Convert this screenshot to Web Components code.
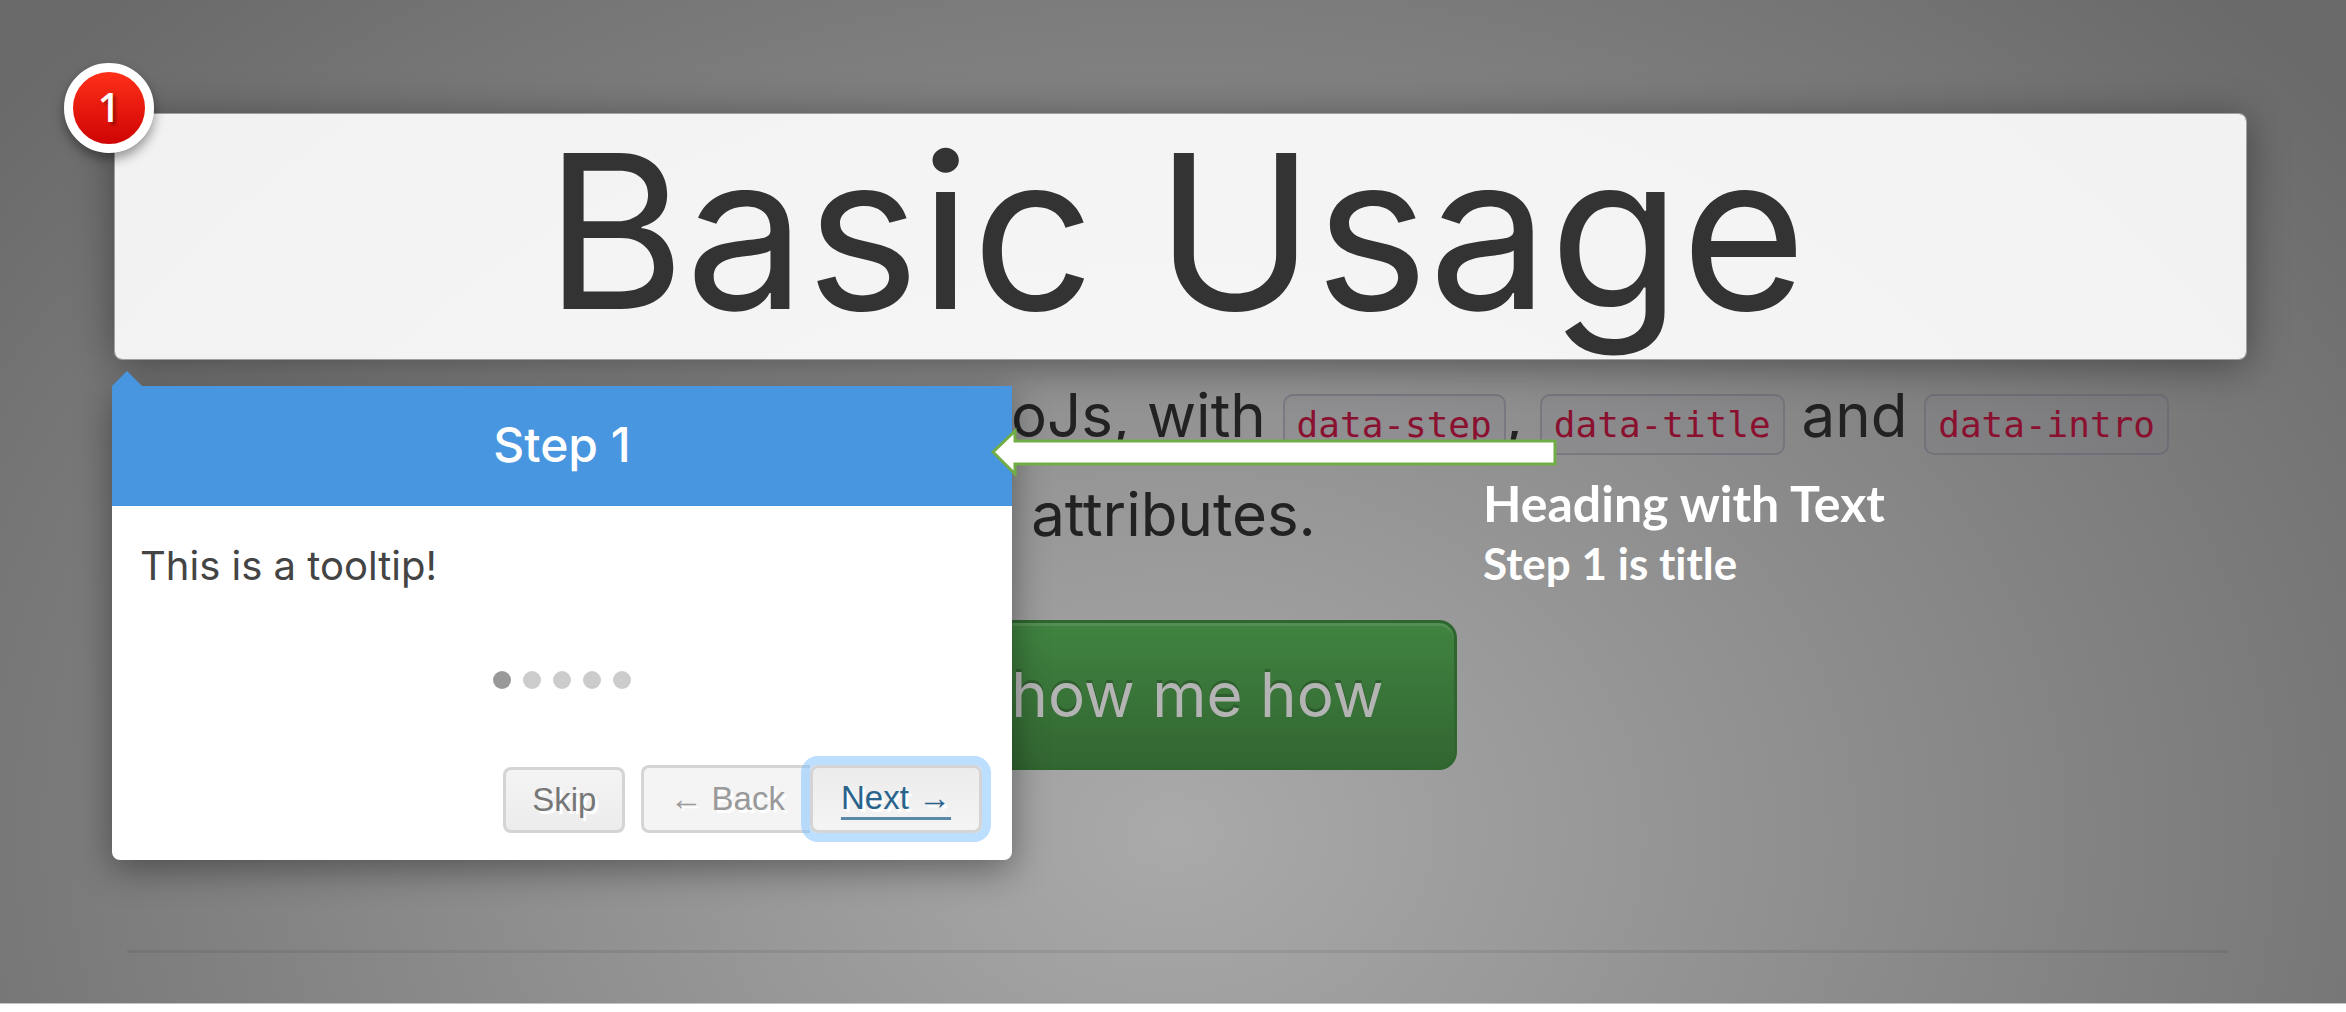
<!DOCTYPE html>
<html lang="en">
<head>
<meta charset="utf-8">
<title>Basic Usage</title>
<style>
html, body { margin: 0; background: #fff; }
body { font-family: Inter, "Open Sans", sans-serif; }
</style>
</head>
<body>
<tour-stage>
  <tour-highlight step="1">Basic Usage
    <tour-tooltip slot="tooltip" heading="Step 1" steps="5">This is a tooltip!</tour-tooltip>
  </tour-highlight>
  <tour-lead>IntroJs, with <code-tag>data-step</code-tag>, <code-tag>data-title</code-tag> and <code-tag>data-intro</code-tag><span slot="last">attributes.</span></tour-lead>
  <big-button>Show me how</big-button>
  <tour-note slot="note"><span>Heading with Text</span><span slot="sub">Step 1 is title</span></tour-note>
</tour-stage>
<script>
class Base extends HTMLElement {
  connectedCallback() {
    if (this.shadowRoot) return;
    this.attachShadow({ mode: "open" }).innerHTML = this.view();
  }
}

customElements.define("tour-stage", class extends Base {
  view() {
    return `<style>
      :host { display: block; position: relative; overflow: hidden; padding: 113px 99px 50px 114px; border-bottom: 1px solid #c4c4c4;
        background: radial-gradient(ellipse 64% 115% at 50% 83%, #aaa, #6a6a6a); }
      main { display: flex; flex-direction: column; align-items: stretch; }
      hr { box-sizing: border-box; width: auto; height: 3px; margin: 180px 19px 0 13px; border: 0; background: rgba(0, 0, 0, .07); }
    </style><main><slot></slot><hr></main><slot name="note"></slot>`;
  }
});

customElements.define("tour-highlight", class extends Base {
  view() {
    return `<style>
      :host { display: block; position: relative; z-index: 2; box-sizing: border-box; height: 247px; border: 1px solid #a0a0a0; border-radius: 8px;
        background: rgba(255, 255, 255, .91); background-clip: padding-box; box-shadow: 0 6px 40px rgba(0, 0, 0, .4); }
      h1 { margin: 0; padding-right: 10px; text-align: center; font-size: 215px; font-weight: 400; line-height: 234px; color: #333; white-space: nowrap; }
      b { position: absolute; left: -51px; top: -51px; box-sizing: border-box; width: 90px; height: 90px; border: 9px solid #fff; border-radius: 50%;
        background: linear-gradient(#ff3019, #cf0404); color: #fff; text-align: center; font: 600 39px/70px "Open Sans", sans-serif;
        text-shadow: 3px 3px 3px rgba(0, 0, 0, .3); box-shadow: 0 6px 12px rgba(0, 0, 0, .4); }
    </style><h1><slot></slot></h1><b>${this.getAttribute("step")}</b><slot name="tooltip"></slot>`;
  }
});

customElements.define("tour-tooltip", class extends Base {
  view() {
    const dots = Array.from({ length: +this.getAttribute("steps") }, (_, i) =>
      `<li><button aria-label="Go to step ${i + 1}"${i ? "" : ' class="on"'}></button></li>`).join("");
    return `<style>
      :host { display: flex; flex-direction: column; position: absolute; left: -3px; top: 272px; width: 900px; height: 474px; border-radius: 8px;
        background: #fff; color: #444; box-shadow: 0 9px 36px rgba(0, 0, 0, .4); }
      .tip { position: absolute; left: 0; top: -15px; border: 15px solid transparent; border-top: 0; border-bottom-color: #4895e0; }
      h2 { margin: 0; height: 120px; line-height: 118px; text-align: center; font-size: 48px; font-weight: 500; color: #fff; background: #4895e0; }
      p { margin: 0; padding: 28px; font-size: 40px; line-height: 64px; }
      ul { display: flex; justify-content: center; gap: 12px; margin: 45px 0 0; padding: 0; list-style: none; }
      li { display: flex; }
      ul button { width: 18px; height: 18px; padding: 0; border: 0; border-radius: 50%; background: #ccc; }
      ul .on { background: #999; }
      footer { display: flex; justify-content: flex-end; align-items: flex-end; margin-top: 76px; padding-right: 30px; }
      footer button { box-sizing: border-box; height: 68px; padding: 0 28px; border: 3px solid #d4d4d4; border-radius: 8px;
        background: linear-gradient(#f4f4f4, #ececec); color: #777; font: 33px/60px "Liberation Sans", Arial, sans-serif; text-shadow: 3px 3px 0 #fff; }
      footer .skip { height: 66px; margin-right: 16px; padding: 0 26px 2px; }
      footer .back { border-right: 0; border-radius: 8px 0 0 8px; background: #f4f4f4; color: #9a9a9a; padding: 0 25px; }
      footer .next { border-radius: 8px; padding: 0 28px; background: linear-gradient(#ececec, #f4f4f4); color: #2a648c;
        box-shadow: 0 0 0 9px rgba(122, 189, 255, .5); }
      .next span { display: block; line-height: 38px; border-bottom: 3px solid #5a8aa8; }
    </style><i class="tip"></i><h2>${this.getAttribute("heading")}</h2><p><slot></slot></p><ul>${dots}</ul>
    <footer><button class="skip">Skip</button><button class="back">← Back</button><button class="next"><span>Next →</span></button></footer>`;
  }
});

customElements.define("tour-lead", class extends Base {
  view() {
    return `<style>
      :host { display: flex; flex-direction: column; margin-top: 6px; padding: 0 78px 0 64px; font-size: 60px; line-height: 99px; color: #222; white-space: nowrap; }
      .first { text-align: right; }
      .last { text-align: center; }
    </style><div class="first"><slot></slot></div><div class="last"><slot name="last"></slot></div>`;
  }
});

customElements.define("code-tag", class extends Base {
  view() {
    return `<style>
      :host { display: inline; }
      code { padding: 8px 12px; border: 2px solid rgba(90, 90, 110, .4); border-radius: 10px; background: rgba(130, 130, 140, .15);
        color: #8a1030; font: 36px/1 "DejaVu Sans Mono", monospace; }
    </style><code><slot></slot></code>`;
  }
});

customElements.define("big-button", class extends Base {
  view() {
    return `<style>
      :host { display: flex; justify-content: center; margin-top: 56px; padding-right: 6px; }
      button { box-sizing: border-box; height: 150px; padding: 0 70px; border: 3px solid #2f662f; border-radius: 18px; background: linear-gradient(#408340, #326632);
        box-shadow: inset 0 3px 0 rgba(255, 255, 255, .1); color: #b4b4b4; font: 62px/140px Inter, sans-serif; text-shadow: 0 -3px 0 rgba(0, 0, 0, .2); }
    </style><button><slot></slot></button>`;
  }
});

customElements.define("tour-note", class extends Base {
  view() {
    return `<style>
      :host { position: absolute; z-index: 3; left: 991px; top: 426px; display: flex; flex-direction: column; color: #fff;
        font-family: Lato, sans-serif; font-weight: 700; font-variant-ligatures: none; }
      svg { display: block; width: 566px; height: 53px; }
      .head { margin-top: -6px; padding-left: 492px; font-size: 50px; line-height: 60px; white-space: nowrap; }
      .sub { padding-left: 492px; font-size: 44px; line-height: 60px; white-space: nowrap; }
    </style><svg viewBox="0 0 566 53"><path d="M2 26 24 5V15H564V38H24V48Z" fill="#fff" stroke="#70ad47" stroke-width="3"/></svg>
    <div class="head"><slot></slot></div><div class="sub"><slot name="sub"></slot></div>`;
  }
});
</script>
</body>
</html>
